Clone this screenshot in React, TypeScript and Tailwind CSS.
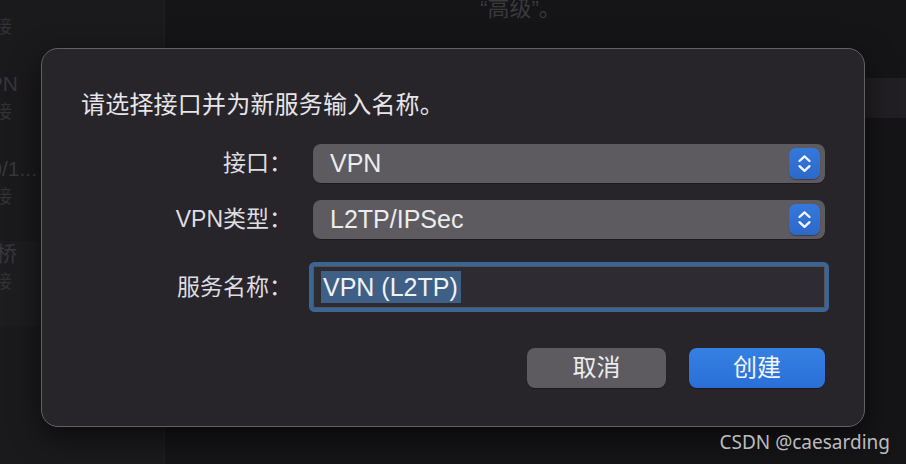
import React from 'react';

const cjk = "font-['Liberation_Sans','Noto_Sans_CJK_SC',sans-serif]";

const Stepper: React.FC = () => (
  <div className="w-[31px] h-[31px] rounded-[7px] bg-gradient-to-b from-[#3479dc] to-[#2d68c9] flex items-center justify-center shadow-[0_1px_1px_rgba(0,0,0,0.35)]">
    <svg width="31" height="31" viewBox="0 0 31 31" fill="none" stroke="#f4f6fa" strokeWidth="2.3" strokeLinecap="round" strokeLinejoin="round">
      <path d="M10.5 13l5-4.6 5 4.6" />
      <path d="M10.5 18.2l5 4.6 5-4.6" />
    </svg>
  </div>
);

const Popup: React.FC<{ value: string }> = ({ value }) => (
  <div className="h-[39px] rounded-[8px] bg-[#5d5b5f] flex items-center justify-between pl-[17px] pr-[5px] shadow-[0_1px_1px_rgba(0,0,0,0.3)]">
    <span className="text-[25px] text-[#ececee] leading-none">{value}</span>
    <Stepper />
  </div>
);

// sidebar rows sit under the dialog; only their cut-off right ends show
const SideItem: React.FC<{ name: string; sub: string; namePad: string; subPad: string; active?: boolean }> = ({ name, sub, namePad, subPad, active }) => (
  <div className={`h-[85px] flex flex-col ${active ? 'bg-[#1d1c1f]' : ''}`}>
    <div className={`flex justify-end overflow-hidden whitespace-nowrap text-[21px] leading-[26px] text-[#38373b] ${namePad}`}>
      <span>{name}</span>
    </div>
    <div className={`flex justify-end overflow-hidden whitespace-nowrap text-[18px] leading-[30px] text-[#323135] ${subPad}`}>
      <span>{sub}</span>
    </div>
  </div>
);

export default function App() {
  return (
    <div className={`relative w-[906px] h-[464px] overflow-hidden bg-[#151417] ${cjk}`}>
      <div className="flex h-full">
        {/* sidebar */}
        <div className="w-[165px] h-full bg-[#1a191c] border-r border-[#1f1e21] flex">
          <div className="w-[40px] flex flex-col -mt-[14px]">
            <SideItem name="Wi-Fi" sub="未连接" namePad="pr-[40px]" subPad="pr-[28px]" />
            <SideItem name="VPN" sub="未连接" namePad="pr-[22px]" subPad="pr-[28px]" />
            <SideItem name="USB 10/1..." sub="未连接" namePad="pr-[3px]" subPad="pr-[28px]" />
            <SideItem name="雷雳网桥" sub="未连接" namePad="pr-[23px]" subPad="pr-[28px]" active />
          </div>
        </div>
        {/* main */}
        <div className="flex-1 flex flex-col">
          <div className="h-[20px] overflow-hidden flex justify-center pr-[30px]">
            <span className="text-[22px] leading-[22px] text-[#3a393d] -mt-[2px]">“高级”。</span>
          </div>
          <div className="mt-[58px] h-[40px] bg-[#211f23]" />
        </div>
      </div>

      {/* dialog */}
      <div className="absolute left-[41px] top-[48px] w-[824px] h-[379px] rounded-[17px] bg-[#27242a] border border-[#626065] shadow-[0_10px_30px_rgba(0,0,0,0.6)] px-[39px] pt-[40px] flex flex-col">
        <div className="text-[24px] leading-[32px] text-[#e6e5e8] tracking-[0.2px]">请选择接口并为新服务输入名称。</div>

        <div className="mt-[23px] grid grid-cols-[211px_1fr] gap-x-[21px] items-center">
          <div className="text-right text-[23px] text-[#dedde0] leading-none">接口：</div>
          <Popup value="VPN" />

          <div className="mt-[17px] text-right text-[23px] text-[#dedde0] leading-none">VPN类型：</div>
          <div className="mt-[17px]"><Popup value="L2TP/IPSec" /></div>

          <div className="mt-[27px] text-right text-[23px] text-[#dedde0] leading-none">服务名称：</div>
          <div className="mt-[27px] h-[42px] rounded-[2px] ring-[4px] ring-[#3b6592] border border-[#55535a] bg-[#2f2b33] flex items-center pl-[7px]">
            <span className="bg-[#3e5f86] text-[25px] leading-[32px] text-[#f2f2f4] pl-[2px] pr-[3px]">VPN (L2TP)</span>
          </div>
        </div>

        <div className="mt-[40px] flex justify-end gap-[23px]">
          <button className="w-[139px] h-[40px] rounded-[8px] bg-[#5d5b5f] text-[24px] text-[#ececee] flex items-center justify-center shadow-[0_1px_1px_rgba(0,0,0,0.3)]">取消</button>
          <button className="w-[136px] h-[40px] rounded-[8px] bg-gradient-to-b from-[#3580e3] to-[#2b6fd6] text-[24px] text-[#f4f6fa] flex items-center justify-center shadow-[0_1px_1px_rgba(0,0,0,0.3)]">创建</button>
        </div>
      </div>

      <div className="absolute right-[16px] bottom-[10px] font-['Noto_Sans','Noto_Sans_CJK_SC',sans-serif] text-[19px] leading-[24px] text-[#bdbcbf]">CSDN @caesarding</div>
    </div>
  );
}
